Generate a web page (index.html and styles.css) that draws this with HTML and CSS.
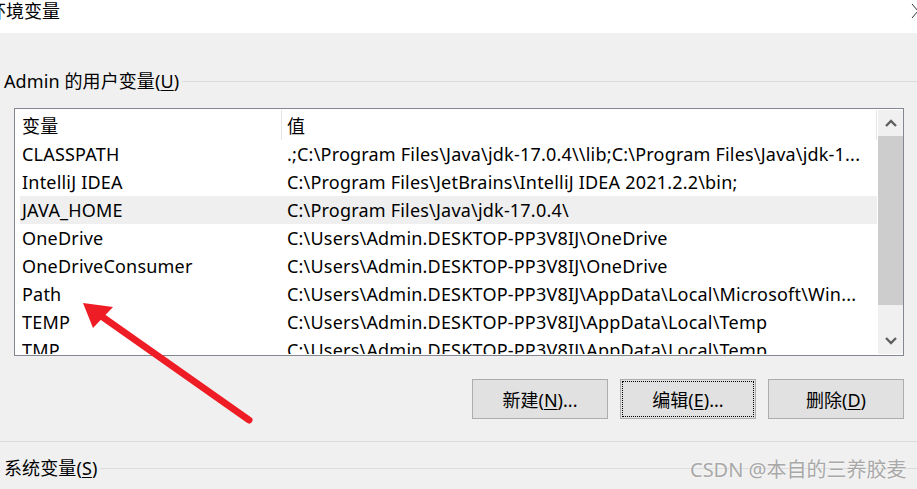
FILE: index.html
```html
<!DOCTYPE html>
<html lang="zh-CN">
  <head>
    <meta charset="UTF-8" />
    <title>环境变量</title>
    <link rel="stylesheet" href="styles.css">
  </head>
  <body>
    <div class="window">
      <div class="titlebar">
        <span class="title">环境变量</span>
        <svg class="close" width="10" height="16" viewBox="0 0 10 16">
          <path d="M2 1 L8 8 L2 15" fill="none" stroke="#333" stroke-width="1" />
        </svg>
      </div>

      <div class="dialog">
        <div class="group-title">
          <span>Admin 的用户变量(<u>U</u>)</span>
          <div class="group-line"></div>
        </div>

        <div class="listbox">
          <div class="list">
            <div class="row head">
              <div class="col-name">变量</div>
              <div class="col-value">值</div>
            </div>
            <div class="row">
              <div class="col-name">CLASSPATH</div>
              <div class="col-value">.;C:\Program Files\Java\jdk-17.0.4\\lib;C:\Program Files\Java\jdk-1...</div>
            </div>
            <div class="row">
              <div class="col-name">IntelliJ IDEA</div>
              <div class="col-value">C:\Program Files\JetBrains\IntelliJ IDEA 2021.2.2\bin;</div>
            </div>
            <div class="row selected">
              <div class="col-name">JAVA_HOME</div>
              <div class="col-value">C:\Program Files\Java\jdk-17.0.4\</div>
            </div>
            <div class="row">
              <div class="col-name">OneDrive</div>
              <div class="col-value">C:\Users\Admin.DESKTOP-PP3V8IJ\OneDrive</div>
            </div>
            <div class="row">
              <div class="col-name">OneDriveConsumer</div>
              <div class="col-value">C:\Users\Admin.DESKTOP-PP3V8IJ\OneDrive</div>
            </div>
            <div class="row">
              <div class="col-name">Path</div>
              <div class="col-value">C:\Users\Admin.DESKTOP-PP3V8IJ\AppData\Local\Microsoft\Win...</div>
            </div>
            <div class="row">
              <div class="col-name">TEMP</div>
              <div class="col-value">C:\Users\Admin.DESKTOP-PP3V8IJ\AppData\Local\Temp</div>
            </div>
            <div class="row">
              <div class="col-name">TMP</div>
              <div class="col-value">C:\Users\Admin.DESKTOP-PP3V8IJ\AppData\Local\Temp</div>
            </div>
          </div>

          <div class="scrollbar">
            <div class="scroll-btn">
              <svg width="12" height="8" viewBox="0 0 12 8">
                <path d="M1 7 L6 2 L11 7" fill="none" stroke="#606060" stroke-width="2.4" />
              </svg>
            </div>
            <div class="thumb"></div>
            <div class="track"></div>
            <div class="scroll-btn">
              <svg width="12" height="8" viewBox="0 0 12 8">
                <path d="M1 1 L6 6 L11 1" fill="none" stroke="#606060" stroke-width="2.4" />
              </svg>
            </div>
          </div>
        </div>

        <div class="actions">
          <button class="btn">新建(<u>N</u>)...</button>
          <button class="btn focused">编辑(<u>E</u>)...</button>
          <button class="btn">删除(<u>D</u>)</button>
        </div>

        <div class="separator"></div>

        <div class="group-title system">
          <span>系统变量(<u>S</u>)</span>
          <div class="group-line"></div>
        </div>
      </div>

      <!-- annotation arrow drawn over the screenshot -->
      <svg class="arrow" width="917" height="489" viewBox="0 0 917 489">
        <line x1="249" y1="420" x2="104" y2="318" stroke="#ee1c25" stroke-width="7" stroke-linecap="round" />
        <polygon points="83,303 113,307 93,328" fill="#ee1c25" />
      </svg>

      <div class="watermark">CSDN @本自的三养胶麦</div>
    </div>
  </body>
</html>
```

FILE: styles.css
```css
* {
  margin: 0;
  padding: 0;
  box-sizing: border-box;
}

body {
  font-family: "Noto Sans", "Noto Sans CJK SC", sans-serif;
  font-size: 18px;
  color: #000;
  background: #f0f0f0;
  width: 917px;
  height: 489px;
  overflow: hidden;
}

.window {
  position: relative;
  width: 917px;
  height: 489px;
  overflow: hidden;
}

.titlebar {
  height: 33px;
  background: #fff;
  display: flex;
  align-items: flex-start;
  justify-content: space-between;
}

.title {
  margin-left: -12px;
  margin-top: -2px;
  font-size: 18px;
  line-height: 26px;
}

.close {
  margin-top: 3px;
  margin-right: -3px;
}

.dialog {
  padding-left: 14px;
  width: 904px;
}

.group-title {
  display: flex;
  align-items: center;
  margin-left: -10px;
  margin-top: 34px;
  height: 28px;
  width: 913px;
}

.group-title span {
  white-space: nowrap;
  line-height: 28px;
  letter-spacing: 0.1px;
}

.group-line {
  flex: 1;
  height: 1px;
  background: #dcdcdc;
  margin-left: 3px;
}

.listbox {
  margin-top: 13px;
  width: 890px;
  height: 248px;
  border: 1px solid #828790;
  background: #fff;
  display: flex;
  padding: 1px 0 1px 5px;
}

.list {
  flex: 1;
  overflow: hidden;
}

.row {
  display: flex;
  height: 28px;
  align-items: center;
  white-space: nowrap;
  letter-spacing: 0.2px;
}

.row.head {
  height: 30px;
  border-right: 1px solid #e5e5e5;
}

.row.selected {
  background: #efefef;
}

.col-name {
  width: 262px;
  padding-left: 2px;
  height: 100%;
  display: flex;
  align-items: center;
}

.head .col-name {
  border-right: 1px solid #e5e5e5;
}

.col-value {
  padding-left: 5px;
  overflow: hidden;
}

.scrollbar {
  width: 25px;
  margin-left: 1px;
  display: flex;
  flex-direction: column;
  background: #f0f0f0;
}

.scroll-btn {
  height: 26px;
  display: flex;
  align-items: center;
  justify-content: center;
}

.thumb {
  height: 169px;
  background: #cdcdcd;
}

.track {
  flex: 1;
}

.actions {
  display: flex;
  justify-content: flex-end;
  gap: 12px;
  margin-top: 23px;
  width: 890px;
}

.btn {
  width: 136px;
  height: 40px;
  font-family: inherit;
  font-size: 18px;
  color: #000;
  background: #e1e1e1;
  border: 1px solid #adadad;
  position: relative;
}

.btn.focused::after {
  content: "";
  position: absolute;
  inset: 1px;
  border: 1px dotted #000;
}

.btn u,
.group-title u {
  text-underline-offset: 2px;
}

.separator {
  margin-left: -14px;
  margin-top: 22px;
  width: 917px;
  height: 1px;
  background: #dcdcdc;
}

.group-title.system {
  margin-top: 12px;
}

.arrow {
  position: absolute;
  left: 0;
  top: 0;
  pointer-events: none;
}

.watermark {
  position: absolute;
  left: 690px;
  top: 454px;
  font-family: "Noto Sans", "Noto Sans CJK SC", sans-serif;
  font-size: 20px;
  color: #a8a8a8;
  white-space: nowrap;
  text-shadow: 0 0 2px #fff;
}
```
